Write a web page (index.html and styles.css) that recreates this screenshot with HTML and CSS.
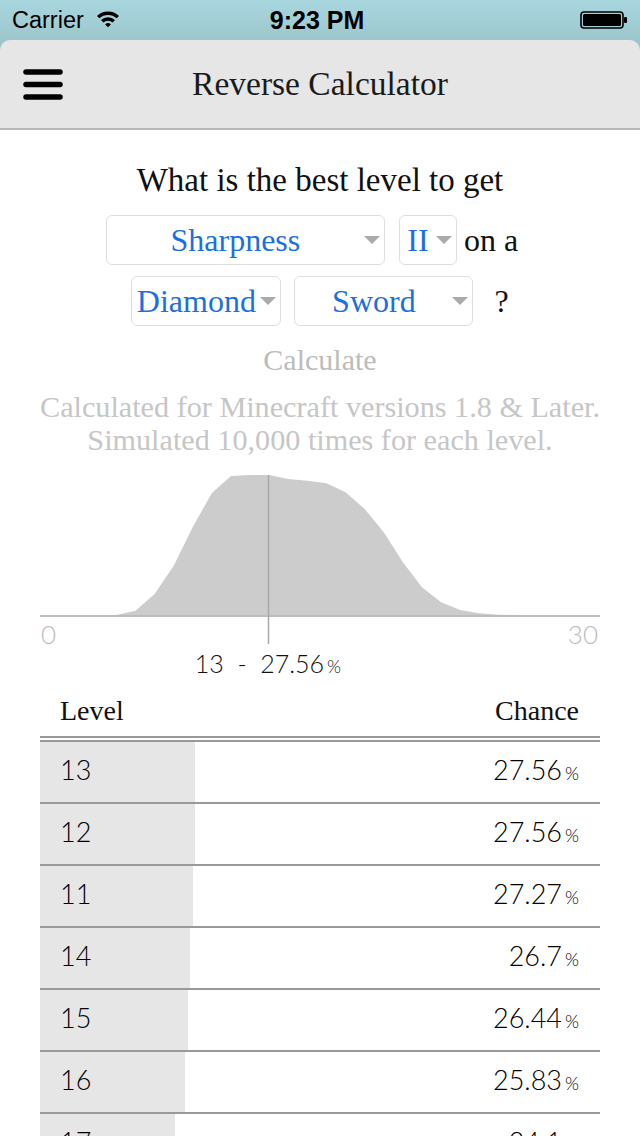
FILE: index.html
```html
<!DOCTYPE html>
<html>
<head>
<meta charset="utf-8">
<link rel="stylesheet" href="styles.css">
</head>
<body>
<div class="top">
  <div class="status">
    <div class="carrier">Carrier
      <svg class="wifi" width="24" height="18" viewBox="0 0 22 17">
        <path d="M0.6 5.6 A15 15 0 0 1 21.4 5.6 L19.2 7.9 A12 12 0 0 0 2.8 7.9 Z"/>
        <path d="M4.4 9.5 A9.5 9.5 0 0 1 17.6 9.5 L15.4 11.8 A6.4 6.4 0 0 0 6.6 11.8 Z"/>
        <path d="M8.3 13.6 A3.9 3.9 0 0 1 13.7 13.6 L11 16.4 Z"/>
      </svg>
    </div>
    <div class="time">9:23 PM</div>
    <div class="battery">
      <svg width="48" height="18" viewBox="0 0 48 18">
        <rect x="1" y="1" width="42" height="16" rx="3" fill="none" stroke="#000" stroke-width="1.6"/>
        <rect x="3" y="3" width="38" height="12" rx="1.5" fill="#000"/>
        <rect x="44" y="6" width="3" height="6" rx="1" fill="#000"/>
      </svg>
    </div>
  </div>
  <header class="nav">
    <div class="menu">
      <svg width="40" height="31" viewBox="0 0 40 31">
        <g stroke="#000" stroke-width="5.5" stroke-linecap="round">
          <line x1="3" y1="3" x2="37" y2="3"/>
          <line x1="3" y1="15.5" x2="37" y2="15.5"/>
          <line x1="3" y1="28" x2="37" y2="28"/>
        </g>
      </svg>
    </div>
    <h1 class="title">Reverse Calculator</h1>
    <div></div>
  </header>
</div>

<main class="content">
  <p class="question">What is the best level to get</p>
  <div class="pick-row row1">
    <div class="select sel-ench"><span class="val">Sharpness</span><span class="arrow"></span></div>
    <div class="select sel-lvl"><span class="val">II</span><span class="arrow"></span></div>
    <span class="word word-on">on a</span>
  </div>
  <div class="pick-row row2">
    <div class="select sel-mat"><span class="val">Diamond</span><span class="arrow"></span></div>
    <div class="select sel-item"><span class="val">Sword</span><span class="arrow"></span></div>
    <span class="word word-q">?</span>
  </div>
  <div class="calc">Calculate</div>
  <p class="info">Calculated for Minecraft versions 1.8 &amp; Later.<br>Simulated 10,000 times for each level.</p>

  <div class="chart">
    <svg width="560" height="180" viewBox="0 0 560 180">
      <polygon fill="#cccccc" points="0,150 76.4,150 95.5,145.7 114.6,129 133.7,100.7 152.8,62 171.9,28 191,11 210.1,10 229.2,10 248.3,14 267.4,15.7 286.5,18.3 305.6,27.3 324.7,44 343.8,67.3 362.9,97.3 382,122.3 401.1,137.3 420.2,145 439.3,148.3 458.4,149.7 477.5,150 560,150"/>
      <line x1="0" y1="151" x2="560" y2="151" stroke="#bcbcbc" stroke-width="2"/>
      <line x1="228.5" y1="10" x2="228.5" y2="179" stroke="#a8a8a8" stroke-width="1.5"/>
      <text class="axis-label" x="1" y="179">0</text>
      <text class="axis-label" x="558" y="179" text-anchor="end">30</text>
    </svg>
  </div>
  <div class="caption">13&nbsp; - &nbsp;27.56<span class="pct">%</span></div>

  <div class="table">
    <div class="thead"><span>Level</span><span>Chance</span></div>
    <div class="trow" style="--w:155px"><span>13</span><span>27.56<span class="pct">%</span></span></div>
    <div class="trow" style="--w:155px"><span>12</span><span>27.56<span class="pct">%</span></span></div>
    <div class="trow" style="--w:153px"><span>11</span><span>27.27<span class="pct">%</span></span></div>
    <div class="trow" style="--w:150px"><span>14</span><span>26.7<span class="pct">%</span></span></div>
    <div class="trow" style="--w:148px"><span>15</span><span>26.44<span class="pct">%</span></span></div>
    <div class="trow" style="--w:145px"><span>16</span><span>25.83<span class="pct">%</span></span></div>
    <div class="trow" style="--w:135px"><span>17</span><span>24.1<span class="pct">%</span></span></div>
    <div class="trow" style="--w:124px"><span>10</span><span>22.09<span class="pct">%</span></span></div>
  </div>
</main>
</body>
</html>
```
FILE: styles.css
```css
* { box-sizing: border-box; }

body {
  margin: 0;
  width: 640px;
  background: #fff;
  font-family: "Liberation Serif", "Times New Roman", serif;
  color: #111;
}

.top {
  background: linear-gradient(180deg, #a9d7df 0px, #9cc6cc 40px, #98c1c7 60px);
}

.status {
  height: 40px;
  display: grid;
  grid-template-columns: 1fr auto 1fr;
  align-items: center;
  padding: 0 12px 0 12px;
  font-family: "Liberation Sans", Arial, sans-serif;
  font-size: 23.5px;
  color: #000;
}

.carrier {
  display: flex;
  align-items: center;
  gap: 12px;
}

.wifi { fill: #000; margin-top: -2px; }

.time { font-weight: bold; font-size: 25px; padding-right: 6px; }

.battery {
  justify-self: end;
  display: flex;
}

.nav {
  height: 90px;
  background: #e6e6e6;
  border-bottom: 2px solid #b7b7b7;
  border-radius: 10px 10px 0 0;
  display: grid;
  grid-template-columns: 1fr auto 1fr;
  align-items: center;
}

.menu {
  padding-left: 23px;
  display: flex;
}

.title {
  margin: 0;
  font-weight: normal;
  font-size: 33.5px;
  color: #1a1a1a;
}

.content {
  padding-top: 30px;
  text-align: center;
}

.question {
  margin: 0;
  font-size: 33px;
  line-height: 40px;
}

.pick-row {
  display: flex;
  justify-content: center;
  align-items: center;
  height: 50px;
}

.row1 { margin-top: 15px; padding-right: 16px; }
.row2 { margin-top: 11px; padding-right: 0; }

.select {
  height: 50px;
  border: 1px solid #dedede;
  border-radius: 6px;
  display: flex;
  align-items: center;
  padding-right: 4px;
}

.val {
  flex: 1;
  text-align: center;
  color: #1c6fe0;
  font-size: 32px;
  line-height: 40px;
}

.arrow {
  width: 0;
  height: 0;
  border-left: 8px solid transparent;
  border-right: 8px solid transparent;
  border-top: 8px solid #aaaaaa;
}

.sel-ench { width: 279px; }
.sel-lvl { width: 58px; margin-left: 14px; }
.sel-mat { width: 150px; }
.sel-item { width: 179px; margin-left: 13px; }

.word {
  font-size: 32px;
  line-height: 40px;
}
.word-on { margin-left: 7px; }
.word-q { margin-left: 21px; }

.calc {
  margin-top: 14px;
  font-size: 30px;
  line-height: 40px;
  color: #bcbcbc;
}

.info {
  margin: 11px 0 0;
  font-size: 30.2px;
  line-height: 33px;
  color: #c6c6c6;
  white-space: nowrap;
}

.chart {
  margin: 8px 40px 0;
}

.chart svg {
  display: block;
  overflow: visible;
}

.axis-label {
  font-family: Lato, "Open Sans", sans-serif;
  font-weight: 300;
  font-size: 26px;
  fill: #bbbbbb;
}

.caption {
  width: 536px;
  text-align: center;
  font-family: Lato, "Open Sans", sans-serif;
  font-weight: 300;
  font-size: 25px;
  line-height: 36px;
  color: #111;
}

.pct {
  font-size: 18px;
  margin-left: 3px;
}

.table {
  margin: 0 40px;
  text-align: left;
}

.thead {
  display: flex;
  justify-content: space-between;
  align-items: flex-end;
  height: 58px;
  padding: 0 21px 7px 20px;
  border-bottom: 6px double #999;
  font-size: 28px;
  line-height: 36px;
  color: #111;
}

.trow {
  height: 62px;
  display: flex;
  justify-content: space-between;
  align-items: center;
  padding: 0 21px 5px 20px;
  border-bottom: 2px solid #999;
  background: linear-gradient(90deg, #e6e6e6 var(--w), #ffffff var(--w));
  font-family: Lato, "Open Sans", sans-serif;
  font-weight: 300;
  font-size: 27px;
  color: #000;
}
```
